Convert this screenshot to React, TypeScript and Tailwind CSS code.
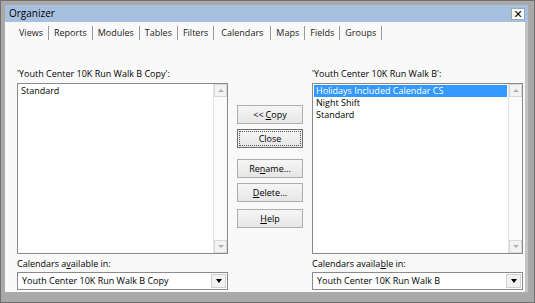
import React from 'react';

const font = { fontFamily: '"Open Sans", "DejaVu Sans", sans-serif' };

const TABS = ['Views', 'Reports', 'Modules', 'Tables', 'Filters', 'Calendars', 'Maps', 'Fields', 'Groups'];

function ScrollBar() {
  return (
    <div className="flex flex-col justify-between w-[14px] h-full border-l border-[#e4e4e4] bg-[#fbfbfb]">
      <div className="h-[13px] border border-[#d8d8d8] bg-[#f3f3f3] flex items-center justify-center">
        <div className="w-0 h-0 border-l-[3px] border-r-[3px] border-b-[3px] border-l-transparent border-r-transparent border-b-[#b0b0b0]" />
      </div>
      <div className="h-[13px] border border-[#d8d8d8] bg-[#f3f3f3] flex items-center justify-center">
        <div className="w-0 h-0 border-l-[3px] border-r-[3px] border-t-[3px] border-l-transparent border-r-transparent border-t-[#b0b0b0]" />
      </div>
    </div>
  );
}

function ListBox({ items, selected }: { items: string[]; selected?: number }) {
  return (
    <div className="flex h-[171px] w-[211px] border border-[#8a8a8a] bg-white">
      <div className="flex-1 pt-[1px] px-[1px] leading-[12px]">
        {items.map((it, i) => (
          <div
            key={it}
            className={`px-[2px] h-[12px] ${i === selected ? 'bg-[#3399ff] text-white' : 'text-black'}`}
          >
            {it}
          </div>
        ))}
      </div>
      <ScrollBar />
    </div>
  );
}

function Combo({ value }: { value: string }) {
  return (
    <div className="flex h-[18px] w-[211px] border border-[#8a8a8a] bg-white items-center">
      <div className="flex-1 pl-[4px] text-black">{value}</div>
      <div className="w-[15px] h-[14px] mr-[1px] border border-[#d0d0d0] bg-[#f2f2f2] flex items-center justify-center">
        <div className="w-0 h-0 border-l-[3px] border-r-[3px] border-t-[4px] border-l-transparent border-r-transparent border-t-black" />
      </div>
    </div>
  );
}

function Btn({ children, focused, className = '' }: { children: React.ReactNode; focused?: boolean; className?: string }) {
  return (
    <div
      className={`w-[66px] h-[19px] flex items-center justify-center text-black bg-gradient-to-b from-[#f6f6f6] to-[#e6e6e6] border ${
        focused ? 'border-[#707070]' : 'border-[#adadad]'
      } ${className}`}
    >
      <div className={`w-[62px] h-[15px] flex items-center justify-center ${focused ? 'border border-dotted border-[#555]' : ''}`}>
        {children}
      </div>
    </div>
  );
}

export default function App() {
  return (
    <div
      className="w-[535px] h-[303px] bg-[#a9a9a9] border border-[#6f6f6f] pl-[4px] pr-[6px] pt-[4px] pb-[10px] flex flex-col text-[9px]"
      style={font}
    >
      {/* Title bar */}
      <div className="h-[17px] bg-[#a8c0e0] flex items-center justify-between pl-[4px] pr-[3px] shrink-0">
        <span className="text-black text-[10px]">Organizer</span>
        <div className="w-[14px] h-[12px] bg-white border border-[#9aa] flex items-center justify-center text-black text-[11px] font-bold leading-none">
          ✕
        </div>
      </div>

      {/* Client */}
      <div className="flex-1 bg-[#f9f9f9] flex flex-col border-r-[3px] border-[#c4c4c4]">
        {/* Tabs */}
        <div className="h-[20px] flex items-center pl-[9px] pt-[2px] text-[#222]">
          {TABS.map((t) => (
            <div key={t} className="flex items-center">
              <span className={t === 'Calendars' ? 'px-[7px]' : 'px-[5px]'}>{t}</span>
              <span className="w-px h-[14px] bg-[#9a9a9a]" />
            </div>
          ))}
        </div>

        {/* Body */}
        <div className="flex-1 flex pl-[12px] pt-[26px]">
          <div className="flex flex-col">
            <div className="text-black h-[12px] leading-[12px] mb-[3px]">'Youth Center 10K Run Walk B Copy':</div>
            <ListBox items={['Standard']} />
            <div className="text-black h-[12px] leading-[12px] mt-[4px] mb-[2px]">
              Calendars a<span className="underline">v</span>ailable in:
            </div>
            <Combo value="Youth Center 10K Run Walk B Copy" />
          </div>

          <div className="flex flex-col w-[84px] items-center pt-[37px]">
            <Btn>&lt;&lt; <span className="underline ml-[2px]">C</span>opy</Btn>
            <Btn focused className="mt-[5px]">Close</Btn>
            <Btn className="mt-[11px]">Re<span className="underline">n</span>ame...</Btn>
            <Btn className="mt-[5px]"><span className="underline">D</span>elete...</Btn>
            <Btn className="mt-[7px]"><span className="underline">H</span>elp</Btn>
          </div>

          <div className="flex flex-col">
            <div className="text-black h-[12px] leading-[12px] mb-[3px]">'Youth Center 10K Run Walk B':</div>
            <ListBox items={['Holidays Included Calendar CS', 'Night Shift', 'Standard']} selected={0} />
            <div className="text-black h-[12px] leading-[12px] mt-[4px] mb-[2px]">
              Calendars availa<span className="underline">b</span>le in:
            </div>
            <Combo value="Youth Center 10K Run Walk B" />
          </div>
        </div>
      </div>
    </div>
  );
}
